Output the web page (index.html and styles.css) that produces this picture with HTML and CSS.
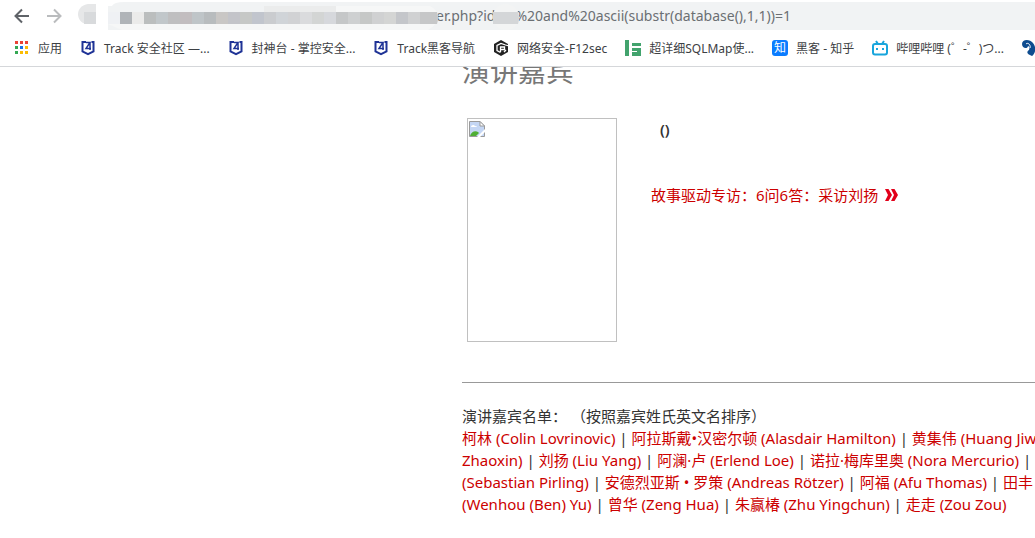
FILE: index.html
```html
<!DOCTYPE html>
<html lang="zh-CN">
<head>
    <meta charset="UTF-8">
    <meta name="viewport" content="width=device-width, initial-scale=1.0">
    <title>演讲嘉宾</title>
    <link rel="stylesheet" href="styles.css">
</head>
<body>

<svg class="defs" width="0" height="0">
    <symbol id="shield" viewBox="0 0 16 16">
        <path d="M6 2H2.500V11.500L8 14.200L13.500 11.500V2H11.500" fill="none" stroke="#1f3396" stroke-width="2"/>
        <path d="M6 2.500H10L6 8.500H11M10 3V10" fill="none" stroke="#1f3396" stroke-width="1.500"/>
    </symbol>
</svg>

<header class="browser">
    <div class="toolbar">
        <button type="button" class="nav" aria-label="后退">
            <svg width="16" height="16" viewBox="0 0 16 16"><path d="M15 8H2M8 1.5L1.5 8L8 14.5" fill="none" stroke="#5f6368" stroke-width="2"/></svg>
        </button>
        <button type="button" class="nav" aria-label="前进" disabled>
            <svg width="16" height="16" viewBox="0 0 16 16"><path d="M1 8H14M8 1.5L14.5 8L8 14.5" fill="none" stroke="#babcbe" stroke-width="2"/></svg>
        </button>
        <div class="address">
            <svg class="mosaic" width="364" height="28" viewBox="0 0 364 28">
                <path d="M0 0H46Q36 0 34 4H30V28H0Z" fill="#fff"/>
                <path d="M10 2H18V22H8C3 21 0 17 0 12S4 3 10 2Z" fill="#e6e7e8"/>
                <path d="M6 10H18V22H6Z" fill="#d8dadc"/>
                <path d="M30 4H352Q360 8 360 15T350 28H44L30 22Z" fill="#f6f7f7"/>
                <path d="M30 4H186V10H30Z" fill="#f1f3f4"/>
                <path d="M186 4H258V10H186Z" fill="#ebecec"/>
                <path d="M30 10H42V22H30Z" fill="#eff1f4"/>
                <path d="M42 10H54V22H42Z" fill="#b0b4b8"/>
                <path d="M54 10H66V22H54Z" fill="#ebebea"/>
                <path d="M66 10H78V22H66Z" fill="#bbbebe"/>
                <path d="M78 10H90V22H78Z" fill="#c1c7ca"/>
                <path d="M90 10H102V22H90Z" fill="#bfbfc0"/>
                <path d="M102 10H114V22H102Z" fill="#c2bdbf"/>
                <path d="M114 10H126V22H114Z" fill="#bfc5c8"/>
                <path d="M126 10H138V22H126Z" fill="#b8bcbe"/>
                <path d="M138 10H150V22H138Z" fill="#c9c7c5"/>
                <path d="M150 10H162V22H150Z" fill="#c3c4c9"/>
                <path d="M162 10H174V22H162Z" fill="#c6c8c6"/>
                <path d="M174 10H186V22H174Z" fill="#c1c5cd"/>
                <path d="M186 10H198V22H186Z" fill="#cacccf"/>
                <path d="M198 10H210V22H198Z" fill="#d0d4d8"/>
                <path d="M210 10H222V22H210Z" fill="#d1d2d4"/>
                <path d="M222 10H234V22H222Z" fill="#dadbdd"/>
                <path d="M234 10H246V22H234Z" fill="#d3d5d4"/>
                <path d="M246 10H258V22H246Z" fill="#d6d8dc"/>
                <path d="M258 10H270V22H258Z" fill="#c5c7c8"/>
                <path d="M270 10H282V22H270Z" fill="#ced0d1"/>
                <path d="M282 10H294V22H282Z" fill="#c6c8c7"/>
                <path d="M294 10H306V22H294Z" fill="#d0d1d2"/>
                <path d="M306 10H318V22H306Z" fill="#d4d5d4"/>
                <path d="M318 10H330V22H318Z" fill="#c4c6ca"/>
                <path d="M330 10H342V22H330Z" fill="#d0d1d2"/>
                <path d="M342 10H359Q361 16 359 22H342Z" fill="#c6c7c8"/>
            </svg>
            <span class="url">er.php?id</span>
            <svg class="blot" width="26" height="28" viewBox="0 0 26 28"><circle cx="13" cy="15" r="13" fill="#f3f4f4"/><path d="M0 10H25Q27 16 25 22H0Z" fill="#d4d6d8"/></svg>
            <span class="url">%20and%20ascii(substr(database(),1,1))=1</span>
        </div>
    </div>
    <nav class="bookmarks">
        <a href="#" class="bm"><svg width="16" height="16" viewBox="0 0 16 16"><path d="M1 1h3v3H1zM6 1h3v3H6zM11 1h3v3h-3z" fill="#ea4335"/><path d="M1 6h3v3H1zM1 11h3v3H1z" fill="#34a853"/><path d="M6 6h3v3H6z" fill="#1a73e8"/><path d="M11 6h3v3h-3zM6 11h3v3H6zM11 11h3v3h-3z" fill="#fbbc04"/></svg>应用</a>
        <a href="#" class="bm"><svg width="16" height="16"><use href="#shield"/></svg>Track 安全社区 —...</a>
        <a href="#" class="bm"><svg width="16" height="16"><use href="#shield"/></svg>封神台 - 掌控安全...</a>
        <a href="#" class="bm"><svg width="16" height="16"><use href="#shield"/></svg>Track黑客导航</a>
        <a href="#" class="bm"><svg width="16" height="16" viewBox="0 0 16 16"><path d="M8 0L15 4V12L8 16L1 12V4Z" fill="#222"/><path d="M16 6L12.500 5L8 3.500L4 5.500V10.500L7.500 12.500M7.500 12V7H11.500V9.500H7.500M13 10L11 12" fill="none" stroke="#fff" stroke-width="1.300"/></svg>网络安全-F12sec</a>
        <a href="#" class="bm"><svg width="16" height="16" viewBox="0 0 16 16"><path d="M0 0h4v16H0zM7 3h9v3H7zM7 8h9v8H7z" fill="#42a36d"/><path d="M7 11h5v1H7z" fill="#fff"/></svg>超详细SQLMap使...</a>
        <a href="#" class="bm"><span class="zhi">知</span>黑客 - 知乎</a>
        <a href="#" class="bm"><svg width="16" height="16" viewBox="0 0 16 16"><rect x="1" y="4" width="14" height="10.500" rx="2" fill="none" stroke="#18a5dc" stroke-width="2"/><path d="M4 1L6 4M12 1L10 4M5 8V10M11 8V10" stroke="#18a5dc" stroke-width="2"/></svg>哔哩哔哩 (゜-゜)つ...</a>
        <a href="#" class="bm" aria-label="书签"><svg width="16" height="16" viewBox="0 0 16 16"><path d="M0 4C0-1 8-1 11 3C15 8 13 14 10 16C5 14 4 12 7 10C8 8 7 6 6 6C6 9 0 9 0 4Z" fill="#0e4c8f"/><path d="M4 4C6 2 9 5 8 8" fill="none" stroke="#fff"/></svg></a>
    </nav>
</header>

<main class="page">
    <h1>演讲嘉宾</h1>
    <section class="speaker">
        <div class="photo">
            <svg width="16" height="16" viewBox="0 0 16 16">
                <path d="M0.500 0.500H11L15.500 5V15.500H0.500Z" fill="#c4d6f4" stroke="#9a9a9a"/>
                <path d="M11 0.500V5H15.500Z" fill="#fff" stroke="#9a9a9a"/>
                <path d="M2 6C2 4 5 3 6 5C8 5 8 6 8 6Z" fill="#fff"/>
                <path d="M1 15C2 11 6 9 9 11L10 12L7 15Z" fill="#4fae35"/>
                <path d="M8 16L16 8V11L11 16Z" fill="#fff"/>
            </svg>
        </div>
        <div class="info">
            <h2>()</h2>
            <a href="#">故事驱动专访：6问6答：采访刘扬 <svg class="more" width="13" height="12" viewBox="0 0 13 12"><path d="M0 0H3.500L7 6L3.500 12H0L3 6ZM6 0H9.500L13 6L9.500 12H6L9 6Z" fill="#e2001a"/></svg></a>
        </div>
    </section>
    <section class="list">
        <p>演讲嘉宾名单： （按照嘉宾姓氏英文名排序）</p>
        <p><a href="#">柯林 (Colin Lovrinovic)</a> | <a href="#">阿拉斯戴•汉密尔顿 (Alasdair Hamilton)</a> | <a href="#">黄集伟 (Huang Jiwei)</a></p>
        <p><a href="#">Zhaoxin)</a> | <a href="#">刘扬 (Liu Yang)</a> | <a href="#">阿澜·卢 (Erlend Loe)</a> | <a href="#">诺拉·梅库里奥 (Nora Mercurio)</a> | <a href="#">塞</a></p>
        <p><a href="#">(Sebastian Pirling)</a> | <a href="#">安德烈亚斯 • 罗策 (Andreas Rötzer)</a> | <a href="#">阿福 (Afu Thomas)</a> | <a href="#">田丰</a></p>
        <p><a href="#">(Wenhou (Ben) Yu)</a> | <a href="#">曾华 (Zeng Hua)</a> | <a href="#">朱赢椿 (Zhu Yingchun)</a> | <a href="#">走走 (Zou Zou)</a></p>
    </section>
</main>

</body>
</html>
```
FILE: styles.css
```css
body {
    margin: 0;
    font-family: "Noto Sans", "Noto Sans CJK SC", sans-serif;
    background-color: #fff;
    color: #333;
    overflow: hidden;
}

a {
    color: #c00;
    text-decoration: none;
}

.defs {
    position: absolute;
}

.browser {
    position: relative;
    background-color: #fff;
    border-bottom: 1px solid #d5d7da;
}

.toolbar {
    display: flex;
    align-items: center;
    padding: 2px 0 0 14px;
}

.nav {
    display: flex;
    width: 32px;
    padding: 0;
    border: none;
    background: none;
}

.address {
    display: flex;
    flex: 1;
    height: 28px;
    align-items: center;
    overflow: hidden;
    white-space: nowrap;
    background-color: #f1f3f4;
}

.url {
    font-size: 14px;
    line-height: 28px;
    color: #6b6f73;
}

.mosaic, .blot {
    flex: none;
    z-index: 1;
}

.mosaic {
    margin-right: -6px;
}

.blot {
    margin: 0 -4px 0 -2px;
}

.bookmarks {
    display: flex;
    height: 36px;
    align-items: center;
    padding-left: 14px;
    overflow: hidden;
}

.bm {
    display: flex;
    flex: none;
    align-items: center;
    gap: 8px;
    margin-right: 18px;
    font-size: 12px;
    color: #3c4043;
    white-space: nowrap;
}

.zhi {
    width: 16px;
    border-radius: 3px;
    background-color: #0a7cff;
    color: #fff;
    font-size: 12px;
    line-height: 16px;
    text-align: center;
}

.page {
    margin-left: 462px;
}

h1 {
    margin: -14px 0 0;
    font-size: 28px;
    font-weight: normal;
    line-height: 36px;
    color: #777;
}

.speaker {
    display: flex;
    padding: 29px 0 40px 5px;
    border-bottom: 1px solid #999;
}

.photo {
    width: 147px;
    height: 221px;
    padding: 1px 0 0 1px;
    border: 1px solid #c0c0c0;
}

.info {
    margin-left: 34px;
    font-size: 15px;
}

.more {
    margin-left: 3px;
}

h2 {
    margin: 0 0 44px 9px;
    font-size: 15px;
    font-weight: 600;
    line-height: 22px;
}

.list {
    padding-top: 22px;
    font-size: 15px;
    line-height: 22px;
    white-space: nowrap;
}

.list p {
    margin: 0;
}
```
